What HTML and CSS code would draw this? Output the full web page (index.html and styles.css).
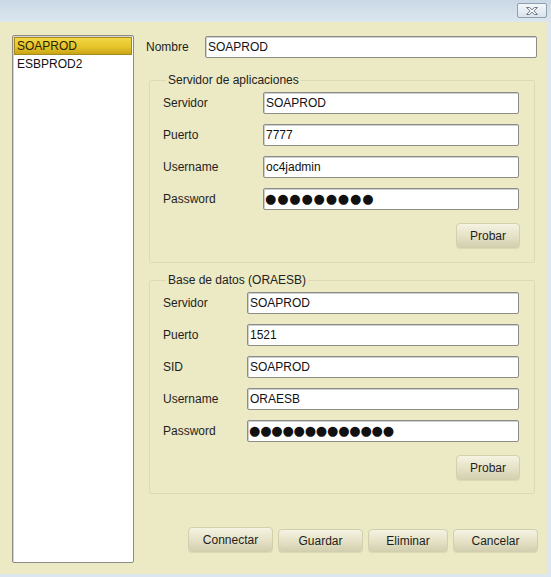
FILE: index.html
```html
<!DOCTYPE html>
<html lang="es">
<head>
<meta charset="utf-8">
<title>Conexiones</title>
<link rel="stylesheet" href="styles.css">
</head>
<body>
<div class="window">
  <div class="titlebar">
    <button class="close" aria-label="Cerrar">
      <svg width="16" height="10" viewBox="0 0 16 10">
        <path d="M2.5 1.5 L5.5 1.5 L8 3.8 L10.5 1.5 L13.5 1.5 L9.8 5 L13.5 8.5 L10.5 8.5 L8 6.2 L5.5 8.5 L2.5 8.5 L6.2 5 Z" fill="#ffffff" stroke="#6b7b8c" stroke-width="1" stroke-linejoin="round"/>
      </svg>
    </button>
  </div>
  <div class="content">
    <ul class="list">
      <li class="item selected">SOAPROD</li>
      <li class="item">ESBPROD2</li>
    </ul>
    <div class="form">
      <div class="row name-row">
        <span class="label name-label">Nombre</span>
        <div class="field">SOAPROD</div>
      </div>

      <fieldset class="group group-app">
        <legend class="legend">Servidor de aplicaciones</legend>
        <div class="rows">
          <div class="row"><span class="label">Servidor</span><div class="field">SOAPROD</div></div>
          <div class="row"><span class="label">Puerto</span><div class="field">7777</div></div>
          <div class="row"><span class="label">Username</span><div class="field">oc4jadmin</div></div>
          <div class="row"><span class="label">Password</span><div class="field pw pw-a">●●●●●●●●●</div></div>
        </div>
        <div class="actions"><button class="btn probar">Probar</button></div>
      </fieldset>

      <fieldset class="group group-db">
        <legend class="legend">Base de datos (ORAESB)</legend>
        <div class="rows">
          <div class="row"><span class="label">Servidor</span><div class="field">SOAPROD</div></div>
          <div class="row"><span class="label">Puerto</span><div class="field">1521</div></div>
          <div class="row"><span class="label">SID</span><div class="field">SOAPROD</div></div>
          <div class="row"><span class="label">Username</span><div class="field">ORAESB</div></div>
          <div class="row"><span class="label">Password</span><div class="field pw pw-b">●●●●●●●●●●●●●</div></div>
        </div>
        <div class="actions"><button class="btn probar">Probar</button></div>
      </fieldset>

      <div class="footer">
        <button class="btn b-connect default">Connectar</button>
        <button class="btn b-save">Guardar</button>
        <button class="btn b-delete">Eliminar</button>
        <button class="btn b-cancel">Cancelar</button>
      </div>
    </div>
  </div>
</div>
</body>
</html>
```

FILE: styles.css
```css
* { box-sizing: border-box; }

html, body {
  margin: 0;
  padding: 0;
  background: #ece9c5;
}

body {
  font-family: "Liberation Sans", Arial, sans-serif;
  font-size: 12px;
  color: #1e1e1e;
}

.window {
  width: 551px;
  height: 577px;
  display: flex;
  flex-direction: column;
  overflow: hidden;
}

.titlebar {
  height: 22px;
  flex: none;
  background: linear-gradient(#cad8e5, #dce6ef);
  display: flex;
  justify-content: flex-end;
  align-items: flex-start;
  padding: 3px 4px 0 0;
}

.close {
  width: 30px;
  height: 15px;
  margin: 0;
  padding: 0;
  border: 1px solid #8f9fae;
  border-radius: 2px;
  background: linear-gradient(#f4f7fa, #d9e2eb);
  display: flex;
  align-items: center;
  justify-content: center;
}

.close svg { display: block; }

.content {
  flex: 1;
  display: flex;
  gap: 12px;
  padding: 13px 0 0 12px;
  border-right: 3px solid #dbe6f0;
  border-bottom: 3px solid #dbe6f0;
  background: #ece9c5;
}

.list {
  list-style: none;
  margin: 0;
  padding: 1px;
  width: 122px;
  height: 528px;
  flex: none;
  background: #ffffff;
  border: 1px solid #8b8b83;
  border-radius: 2px;
  box-shadow: inset 1px 1px 0 #d6d6d6;
}

.item {
  height: 18px;
  line-height: 17px;
  padding: 0 2px;
  border: 1px solid transparent;
  color: #111;
  white-space: nowrap;
}

.item.selected {
  background: linear-gradient(#f2d644, #e6c52c 55%, #c9a516);
  border-color: #a68a1e;
  color: #2a2200;
}

.form {
  width: 391px;
  flex: none;
  padding-top: 1px;
}

.row {
  display: flex;
  align-items: center;
  height: 22px;
}

.label {
  flex: none;
  white-space: nowrap;
}

.name-label { width: 59px; }

.group-app .label { width: 100px; }
.group-db .label { width: 84px; }

.field {
  flex: 1;
  height: 22px;
  line-height: 20px;
  padding: 0 2px;
  background: #ffffff;
  border: 1px solid #8c8c86;
  border-radius: 2px;
  box-shadow: inset 1px 1px 0 #cfcfcf;
  color: #111;
  white-space: nowrap;
  overflow: hidden;
}

.pw {
  font-family: "DejaVu Sans", sans-serif;
  font-size: 13px;
  line-height: 20px;
  padding-left: 1px;
}

.pw-a { letter-spacing: 0.8px; }
.pw-b { letter-spacing: -0.2px; }

.group {
  margin: 15px 2px 0 3px;
  padding: 5px 15px 14px 13px;
  border: 1px solid #dedab6;
  border-radius: 2px;
  min-inline-size: 0;
}

.group-db {
  margin-top: 10px;
  padding-bottom: 13px;
}

.legend {
  margin-left: 3px;
  padding: 0 2px;
  line-height: 14px;
  color: #222;
}

.rows {
  display: flex;
  flex-direction: column;
  gap: 10px;
}

.actions {
  display: flex;
  justify-content: flex-end;
  margin-top: 13px;
  margin-right: -1px;
}

.btn {
  font-family: "Liberation Sans", Arial, sans-serif;
  font-size: 12px;
  color: #1e1e1e;
  height: 25px;
  margin: 0;
  padding: 0;
  border: 1px solid #d2cfae;
  border-radius: 4px;
  background: linear-gradient(#f5f3e2, #e4e1c6 55%, #d3d0b0);
  box-shadow: 0 1px 0 #dcd8b8;
}

.probar { width: 64px; }

.footer {
  display: flex;
  justify-content: flex-end;
  align-items: flex-end;
  gap: 5px;
  margin-top: 33px;
  margin-right: -1px;
}

.footer .btn { height: 23px; }
.footer .btn.default { height: 25px; }

.b-connect { width: 85px; }
.b-save { width: 85px; }
.b-delete { width: 80px; }
.b-cancel { width: 85px; }
```
